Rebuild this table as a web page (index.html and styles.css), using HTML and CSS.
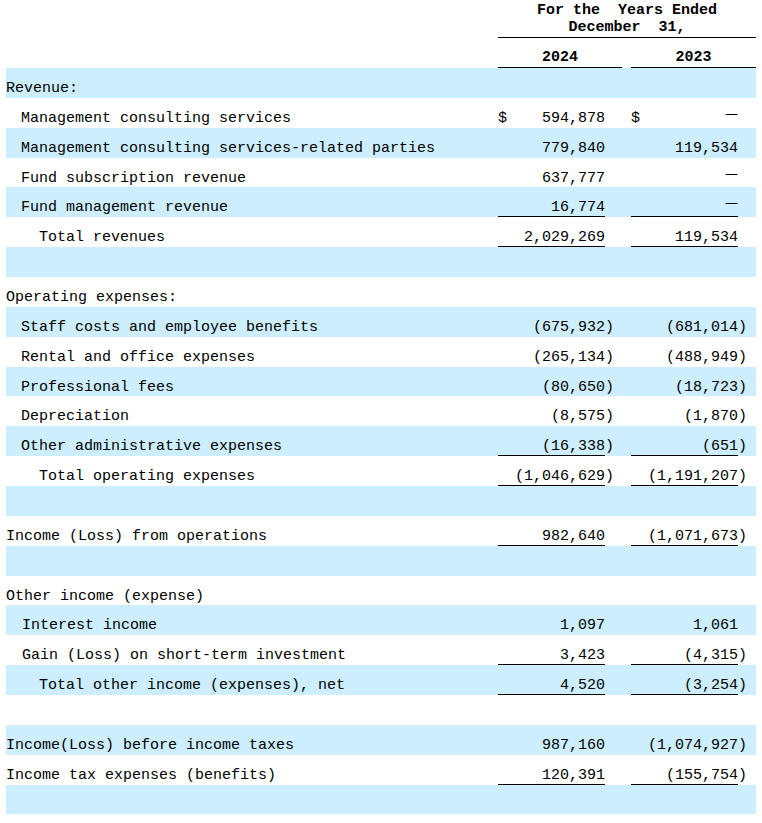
FILE: index.html
```html
<!DOCTYPE html>
<html>
<head>
<meta charset="utf-8">
<link rel="stylesheet" href="styles.css">
</head>
<body>
<div class="sheet">
  <div class="head">
    <div class="head-spacer"></div>
    <div class="head-title">For the  Years Ended<br>December  31,</div>
  </div>
  <div class="years">
    <div></div>
    <div class="year">2024</div>
    <div></div>
    <div class="year">2023</div>
  </div>

  <div class="rows">
    <div class="row"><div class="label">Revenue:</div></div>
    <div class="row"><div class="label l1">Management consulting services</div><div class="num"><span class="cur">$</span><span>594,878</span></div><div class="par"></div><div></div><div class="num"><span class="cur">$</span><span><span class="dash">—</span></span></div><div class="par"></div></div>
    <div class="row"><div class="label l1">Management consulting services-related parties</div><div class="num"><span>779,840</span></div><div class="par"></div><div></div><div class="num"><span>119,534</span></div><div class="par"></div></div>
    <div class="row"><div class="label l1">Fund subscription revenue</div><div class="num"><span>637,777</span></div><div class="par"></div><div></div><div class="num"><span><span class="dash">—</span></span></div><div class="par"></div></div>
    <div class="row"><div class="label l1">Fund management revenue</div><div class="num u"><span>16,774</span></div><div class="par"></div><div></div><div class="num u"><span><span class="dash">—</span></span></div><div class="par"></div></div>
    <div class="row"><div class="label l2">Total revenues</div><div class="num u"><span>2,029,269</span></div><div class="par"></div><div></div><div class="num u"><span>119,534</span></div><div class="par"></div></div>
    <div class="row"></div>
    <div class="row"><div class="label">Operating expenses:</div></div>
    <div class="row"><div class="label l1">Staff costs and employee benefits</div><div class="num"><span>(675,932</span></div><div class="par">)</div><div></div><div class="num"><span>(681,014</span></div><div class="par">)</div></div>
    <div class="row"><div class="label l1">Rental and office expenses</div><div class="num"><span>(265,134</span></div><div class="par">)</div><div></div><div class="num"><span>(488,949</span></div><div class="par">)</div></div>
    <div class="row"><div class="label l1">Professional fees</div><div class="num"><span>(80,650</span></div><div class="par">)</div><div></div><div class="num"><span>(18,723</span></div><div class="par">)</div></div>
    <div class="row"><div class="label l1">Depreciation</div><div class="num"><span>(8,575</span></div><div class="par">)</div><div></div><div class="num"><span>(1,870</span></div><div class="par">)</div></div>
    <div class="row"><div class="label l1">Other administrative expenses</div><div class="num u"><span>(16,338</span></div><div class="par">)</div><div></div><div class="num u"><span>(651</span></div><div class="par">)</div></div>
    <div class="row"><div class="label l2">Total operating expenses</div><div class="num u"><span>(1,046,629</span></div><div class="par">)</div><div></div><div class="num u"><span>(1,191,207</span></div><div class="par">)</div></div>
    <div class="row"></div>
    <div class="row"><div class="label">Income (Loss) from operations</div><div class="num u"><span>982,640</span></div><div class="par"></div><div></div><div class="num u"><span>(1,071,673</span></div><div class="par">)</div></div>
    <div class="row"></div>
    <div class="row"><div class="label">Other income (expense)</div></div>
    <div class="row"><div class="label l1b">Interest income</div><div class="num"><span>1,097</span></div><div class="par"></div><div></div><div class="num"><span>1,061</span></div><div class="par"></div></div>
    <div class="row"><div class="label l1b">Gain (Loss) on short-term investment</div><div class="num u"><span>3,423</span></div><div class="par"></div><div></div><div class="num u"><span>(4,315</span></div><div class="par">)</div></div>
    <div class="row"><div class="label l2">Total other income (expenses), net</div><div class="num u"><span>4,520</span></div><div class="par"></div><div></div><div class="num u"><span>(3,254</span></div><div class="par">)</div></div>
    <div class="row"></div>
    <div class="row"><div class="label">Income(Loss) before income taxes</div><div class="num"><span>987,160</span></div><div class="par"></div><div></div><div class="num"><span>(1,074,927</span></div><div class="par">)</div></div>
    <div class="row"><div class="label">Income tax expenses (benefits)</div><div class="num u"><span>120,391</span></div><div class="par"></div><div></div><div class="num u"><span>(155,754</span></div><div class="par">)</div></div>
    <div class="row"></div>
  </div>
</div>
</body>
</html>
```
FILE: styles.css
```css
html, body {
  margin: 0;
  padding: 0;
  background: #ffffff;
}

body {
  font-family: "Liberation Mono", "DejaVu Sans Mono", monospace;
  font-size: 15px;
  color: #000000;
}

.sheet {
  width: 750px;
  margin-left: 6px;
}

.head {
  display: grid;
  grid-template-columns: 492px 258px;
  height: 38px;
}

.head-title {
  font-weight: bold;
  text-align: center;
  white-space: pre;
  line-height: 17px;
  padding-top: 2px;
  border-bottom: 1px solid #000;
  box-sizing: border-box;
  height: 38px;
}

.years {
  display: grid;
  grid-template-columns: 492px 124px 9px 125px;
  height: 30px;
}

.year {
  font-weight: bold;
  text-align: center;
  line-height: 17px;
  padding-top: 11px;
  border-bottom: 1px solid #000;
  box-sizing: border-box;
  height: 30px;
}

.row {
  display: grid;
  grid-template-columns: 492px 107px 17px 9px 107px 18px;
  height: 29.87px;
}

.row:nth-child(odd) {
  background: #cceeff;
}

.row > div {
  line-height: 17px;
  padding-top: 12px;
  box-sizing: border-box;
  height: 100%;
  white-space: pre;
}

.label {
  padding-left: 0;
}

.l1 { padding-left: 15px; }
.l1b { padding-left: 16px; }
.l2 { padding-left: 33px; }

.num {
  display: flex;
  justify-content: flex-end;
  align-items: flex-start;
}

.num .cur {
  margin-right: auto;
}

.num.u {
  border-bottom: 1px solid #000;
}

.par {
  text-align: left;
}

.dash {
  font-family: "DejaVu Sans", sans-serif;
  font-size: 13px;
  line-height: 0;
  vertical-align: 4px;
}
```
